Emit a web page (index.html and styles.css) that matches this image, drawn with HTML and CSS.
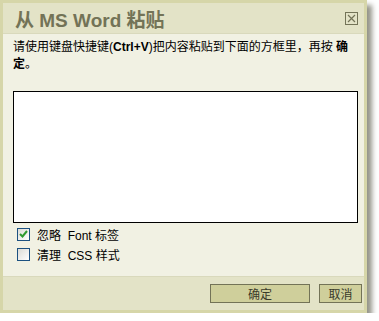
FILE: index.html
```html
<!DOCTYPE html>
<html>
<head>
<meta charset="utf-8">
<link rel="stylesheet" href="styles.css">
</head>
<body>
<div class="dialog">
  <div class="titlebar">
    <span class="title">从 MS Word 粘贴</span>
    <span class="close"><svg width="13" height="13" viewBox="0 0 13 13"><rect x="0.5" y="0.5" width="12" height="12" fill="none" stroke="#737357"/><path d="M3 3L10 10M10 3L3 10" stroke="#737357" stroke-width="1.2"/></svg></span>
  </div>
  <div class="content">
    <p class="instr">请使用键盘快捷键(<b>Ctrl+V</b>)把内容粘贴到下面的方框里，再按 <b>确</b><b>定</b>。</p>
    <div class="paste"></div>
    <label class="opt first"><span class="cb"><svg width="9" height="8" viewBox="0 0 9 8"><path d="M1 4L3.5 6.5L8 1" fill="none" stroke="#2f9a2f" stroke-width="2"/></svg></span>忽略&nbsp; Font 标签</label>
    <label class="opt"><span class="cb"></span>清理&nbsp; CSS 样式</label>
  </div>
  <div class="footer">
    <button class="btn ok">确定</button>
    <button class="btn cancel">取消</button>
  </div>
</div>
</body>
</html>
```
FILE: styles.css
```css
html, body { margin: 0; padding: 0; background: #ffffff; }
body { font-family: "Liberation Sans", "Noto Sans CJK SC", sans-serif; }
.dialog {
  width: 361px;
  height: 307px;
  border: 3px solid #d6d6a9;
  background: #f1f1e3;
  box-shadow: 5px 5px 5px rgba(60,60,40,0.55);
  display: flex;
  flex-direction: column;
}
.titlebar {
  height: 30px;
  background: #e3e3c7;
  border-bottom: 1px solid #d9d9bc;
  display: flex;
  align-items: center;
  justify-content: space-between;
  padding: 0 6px 0 12px;
  flex: none;
}
.title {
  font-family: "Liberation Sans", "Noto Sans CJK SC", sans-serif;
  font-weight: bold;
  font-size: 19px;
  color: #737357;
  margin-top: 1px;
}
.close { display: flex; }
.content {
  flex: 1;
  padding: 5px 3px 0 10px;
  display: flex;
  flex-direction: column;
}
.instr {
  margin: 0;
  font-size: 12px;
  line-height: 17px;
  color: #000;
}
.instr b { font-weight: bold; }
.paste {
  margin-top: 18px;
  height: 130px;
  border: 1px solid #000;
  background: #fff;
  margin-right: 3px;
  flex: none;
}
.opt {
  display: flex;
  align-items: center;
  font-size: 12px;
  color: #000;
  height: 20px;
  padding-left: 4px;
  flex: none;
}
.opt.first { margin-top: 1px; }
.cb {
  width: 11px;
  height: 11px;
  border: 1px solid #1c5180;
  background: linear-gradient(135deg, #dcdcd6, #ffffff);
  margin-right: 7px;
  display: flex;
  align-items: center;
  justify-content: center;
}
.footer {
  height: 33px;
  flex: none;
  background: #e3e3c7;
  border-top: 1px solid #d9d9bc;
  display: flex;
  align-items: center;
  justify-content: flex-end;
  padding: 0 2px 0 0;
  gap: 9px;
}
.btn {
  height: 19px;
  border: 1px solid #737357;
  background: #cfcf9b;
  color: #3a3a2a;
  font-family: "Noto Sans CJK SC", sans-serif;
  font-size: 12px;
  line-height: 15px;
  padding: 0;
}
.ok { width: 100px; }
.cancel { width: 43px; }
```
